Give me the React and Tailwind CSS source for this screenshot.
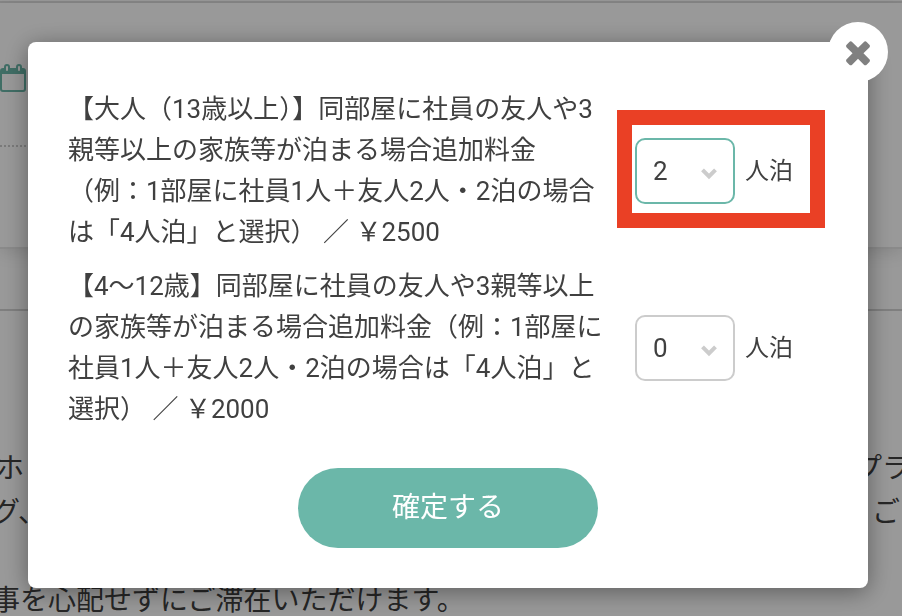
import React, { useState } from 'react';

const guestOptions = [
    {
        id: 'adult',
        text: '【大人（13歳以上）】同部屋に社員の友人や3親等以上の家族等が泊まる場合追加料金（例：1部屋に社員1人＋友人2人・2泊の場合は「4人泊」と選択） ／ ￥2500',
        initial: '2',
        highlighted: true,
    },
    {
        id: 'child',
        text: '【4〜12歳】同部屋に社員の友人や3親等以上の家族等が泊まる場合追加料金（例：1部屋に社員1人＋友人2人・2泊の場合は「4人泊」と選択） ／ ￥2000',
        initial: '0',
        highlighted: false,
    },
];

const CalendarIcon = () => (
    <svg width="26" height="28" viewBox="0 0 26 28" fill="none" aria-hidden="true">
        <rect x="1" y="5" width="24" height="22" rx="2" stroke="#6bb7a9" strokeWidth="2" />
        <path d="M1 5h24v5H1z" fill="#6bb7a9" />
        <rect x="5" y="1" width="4" height="7" rx="2" fill="#fff" stroke="#6bb7a9" strokeWidth="2" />
        <rect x="17" y="1" width="4" height="7" rx="2" fill="#fff" stroke="#6bb7a9" strokeWidth="2" />
    </svg>
);

const CloseIcon = () => (
    <svg width="36" height="36" viewBox="0 0 1792 1792" fill="currentColor" aria-hidden="true">
        <path d="M1490 1322q0 40-28 68l-136 136q-28 28-68 28t-68-28l-294-294-294 294q-28 28-68 28t-68-28l-136-136q-28-28-28-68t28-68l294-294-294-294q-28-28-28-68t28-68l136-136q28-28 68-28t68 28l294 294 294-294q28-28 68-28t68 28l136 136q28 28 28 68t-28 68l-294 294 294 294q28 28 28 68z" />
    </svg>
);

const PlanPage = () => (
    <div className="overflow-hidden" aria-hidden="true">
        <div className="h-[3px] border-b-2 border-[#e0e0e0]" />
        <section className="border-b-2 border-[#e6e6e6] pt-[61px] pb-[100px] shadow-[0_4px_16px_rgba(0,0,0,0.12)]">
            <CalendarIcon />
            <div className="mt-[53px] w-4/5 border-b-2 border-dotted border-[#ccc]" />
        </section>
        <div className="h-[62px] border-b-2 border-[#d4d4d4]" />
        <div className="-mx-2 mt-[136px] text-[28px] leading-[44px] text-[#404040]">
            <p className="flex justify-between pl-1">
                <span>ホ</span>
                <span>プラ</span>
            </p>
            <p className="flex justify-between pr-2.5">
                <span>グ、</span>
                <span>ご</span>
            </p>
            <p className="mt-[44px]">事を心配せずにご滞在いただけます。</p>
        </div>
    </div>
);

const NightSelect = ({ id, initial, highlighted }) => {
    const [value, setValue] = useState(initial);

    return (
        <div className="relative flex shrink-0 items-center gap-2.5">
            <div className="relative">
                <select
                    id={id}
                    value={value}
                    onChange={(e) => setValue(e.target.value)}
                    className={`h-[66px] w-[100px] appearance-none rounded-[10px] border-2 bg-white pl-4 text-[26px] text-[#404040] outline-none ${
                        highlighted ? 'border-[#6bb7a9]' : 'border-[#ccc]'
                    }`}
                >
                    {['0', '1', '2', '3', '4', '5', '6'].map((n) => (
                        <option key={n} value={n}>{n}</option>
                    ))}
                </select>
                <svg
                    className="pointer-events-none absolute top-[30px] right-[18px]"
                    width="16"
                    height="12"
                    viewBox="0 0 16 12"
                    fill="none"
                    stroke="#ccc"
                    strokeWidth="4"
                    aria-hidden="true"
                >
                    <path d="M1.5 1.8L8 8.3l6.5-6.5" />
                </svg>
            </div>
            <label htmlFor={id} className="text-[24px] leading-[41px]">人泊</label>
            {highlighted && (
                <div className="pointer-events-none absolute -top-7 -right-8 -bottom-6 -left-[18px] border-[15px] border-[#ea4025]" />
            )}
        </div>
    );
};

export default function App() {
    return (
        <div className="relative min-h-screen overflow-hidden bg-white font-['Roboto','Noto_Sans_CJK_JP',sans-serif] text-[#404040]" lang="ja">
            <PlanPage />

            {/* Modal */}
            <div className="fixed inset-0 flex items-start justify-center bg-black/40 pt-[42px] pr-[34px] pl-7">
                <div
                    role="dialog"
                    aria-modal="true"
                    className="relative w-full max-w-[840px] rounded-lg bg-white px-10 pt-[47px] pb-10 shadow-[0_4px_24px_rgba(0,0,0,0.4)]"
                >
                    <button
                        type="button"
                        aria-label="閉じる"
                        className="absolute -top-5 -right-5 flex size-[60px] items-center justify-center rounded-full bg-white text-[#808080]"
                    >
                        <CloseIcon />
                    </button>

                    <div className="flex flex-col gap-[13px]">
                        {guestOptions.map((option) => (
                            <div key={option.id} className="flex items-center gap-6 pr-[35px]">
                                <p className="min-w-0 flex-1 text-[26px] leading-[41px]">{option.text}</p>
                                <NightSelect id={option.id} initial={option.initial} highlighted={option.highlighted} />
                            </div>
                        ))}
                    </div>

                    <div className="mt-[38px] flex justify-center">
                        <button type="button" className="h-20 w-[300px] rounded-full bg-[#6bb7a9] text-[28px] text-white">
                            確定する
                        </button>
                    </div>
                </div>
            </div>
        </div>
    );
}
